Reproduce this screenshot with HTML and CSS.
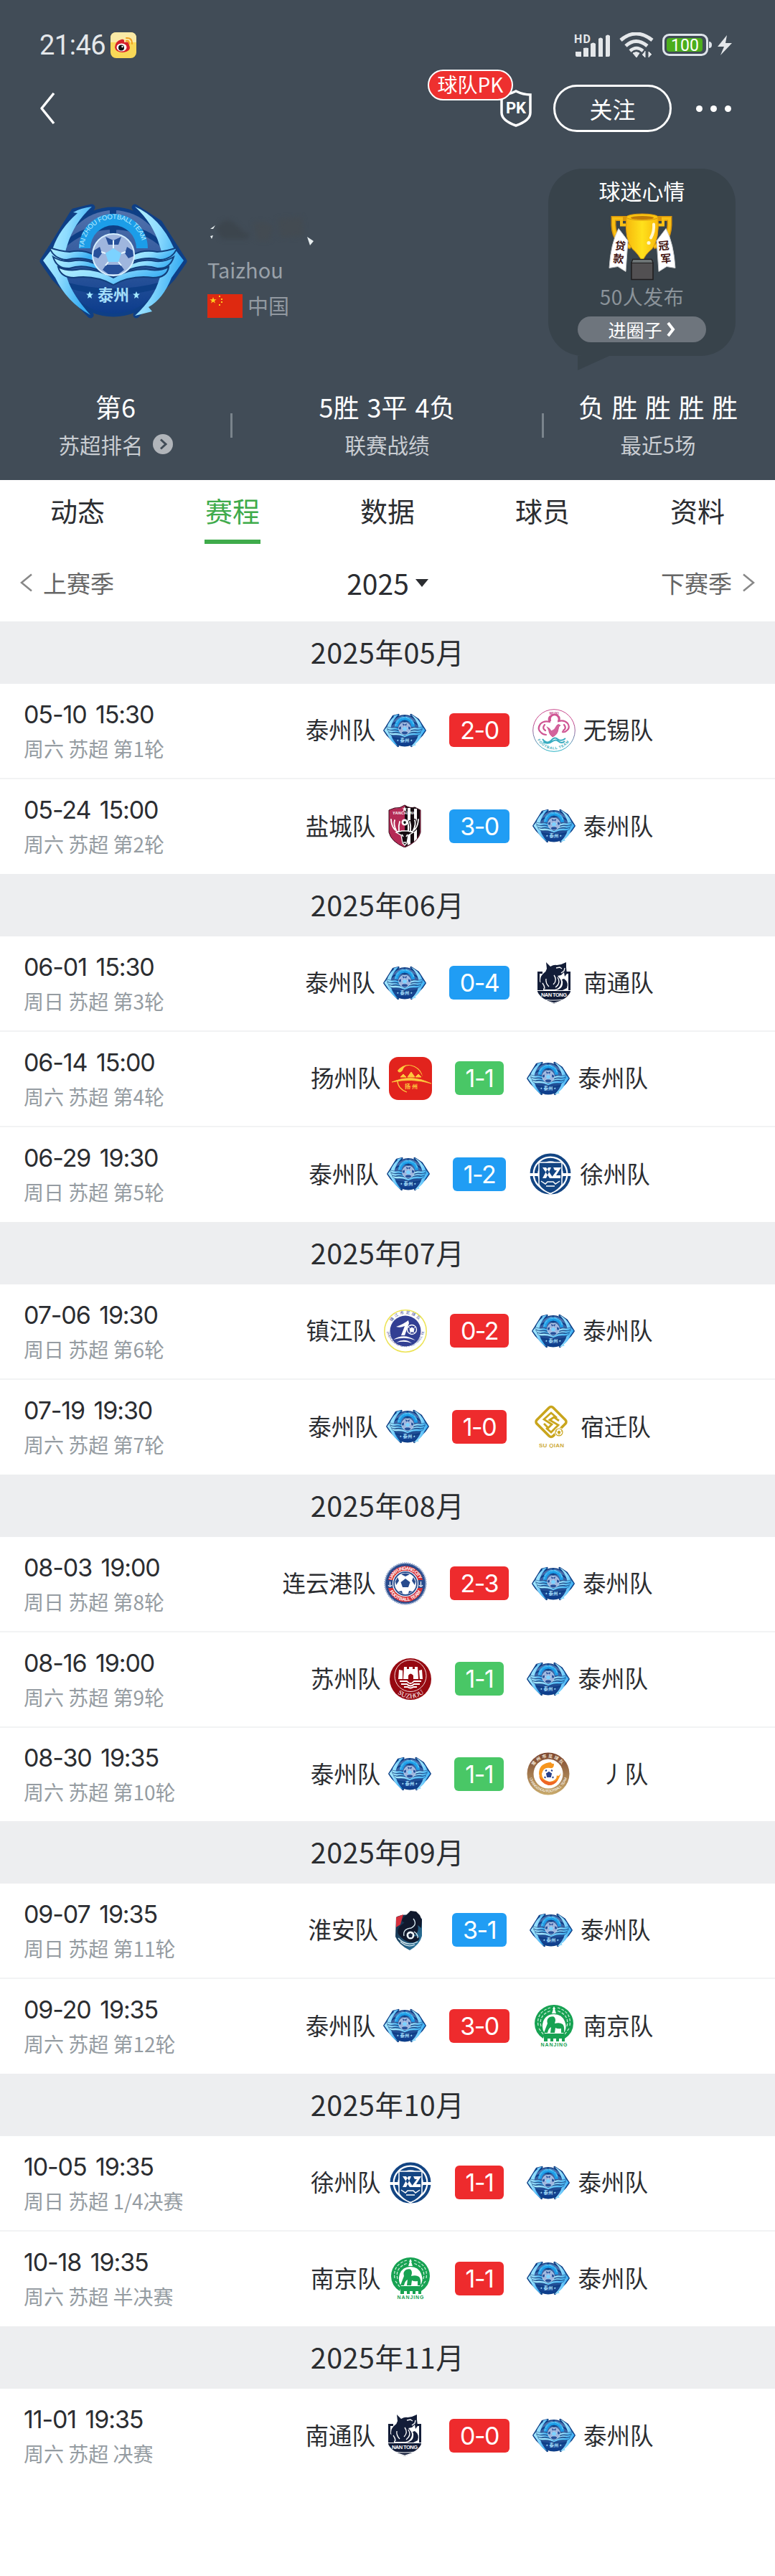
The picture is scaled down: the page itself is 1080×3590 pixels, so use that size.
FILE: index.html
```html
<!DOCTYPE html>
<html lang="zh-CN">
<head>
    <meta charset="UTF-8">
    <meta name="viewport" content="width=device-width, initial-scale=1.0">
    <title>泰州队 - 赛程</title>
    <link rel="stylesheet" href="styles.css">
</head>
<body>
    <!-- team crests -->
    <svg class="defs" width="0" height="0">
        <defs>
            <linearGradient id="tzBall" x1="0" y1="0" x2="0" y2="1">
                <stop offset="0" stop-color="#5272ac"/>
                <stop offset="0.6" stop-color="#2a549a"/>
                <stop offset="1" stop-color="#0c3c8c"/>
            </linearGradient>
            <linearGradient id="tzWing" x1="0" y1="0" x2="1" y2="0.4">
                <stop offset="0" stop-color="#b5f2ff"/>
                <stop offset="0.5" stop-color="#8fdcff"/>
                <stop offset="1" stop-color="#39aef3"/>
            </linearGradient>
            <linearGradient id="wx" x1="0" y1="0" x2="0" y2="1">
                <stop offset="0.3" stop-color="#c8488c"/>
                <stop offset="1" stop-color="#25b2c4"/>
            </linearGradient>
            <linearGradient id="cz" x1="0" y1="0" x2="0" y2="1">
                <stop offset="0" stop-color="#7c4630"/>
                <stop offset="1" stop-color="#c9ab6c"/>
            </linearGradient>
            <linearGradient id="ha" x1="0" y1="0" x2="1" y2="1">
                <stop offset="0" stop-color="#0d1d35"/>
                <stop offset="1" stop-color="#3183ad"/>
            </linearGradient>
            <linearGradient id="cup" x1="0" y1="0" x2="1" y2="0">
                <stop offset="0" stop-color="#f6b80c"/>
                <stop offset="0.5" stop-color="#ffe11c"/>
                <stop offset="1" stop-color="#f7b90a"/>
            </linearGradient>
        </defs>

        <symbol id="taizhou" viewBox="0 0 206 162">
            <g fill="#0e3f86" stroke="#0e3f86" stroke-width="9" stroke-linejoin="round">
                <path d="M73 6L48 12L16 64L5 81L21 104L71 156L39 104V58Z"/>
                <path d="M133 6L167 28L190 64L201 81L185 104L135 156L167 104V58Z"/>
                <circle cx="103" cy="82" r="72"/>
            </g>
            <circle cx="103" cy="82" r="72" fill="url(#tzBall)"/>
            <path d="M98 10h9v40h-9zM40 50Q60 32 98 30V37Q58 40 36 62ZM166 50Q146 32 107 30V37Q148 40 170 62ZM36 110Q103 128 170 110V118Q103 138 38 118Z" fill="#0e3f86"/>
            <path d="M55 63A48 48 0 0 1 151 63H135A32 32 0 0 0 71 63Z" fill="#1c9de8"/>
            <path id="tzArc" d="M62 63A41 41 0 0 1 144 63" fill="none"/>
            <text font-family="Liberation Sans" font-size="9.5" fill="#b9ecff"><textPath href="#tzArc" textLength="118">TAI ZHOU FOOTBALL TEAM</textPath></text>
            <g fill="url(#tzWing)">
                <path d="M73 5Q57 7 47 13L53 14Q28 36 19 62L5 80L22 104Q38 138 71 156Q46 128 39 106Q30 82 39 58Q48 28 73 5Z"/>
                <path d="M133 5Q168 20 187 62L201 80L184 104Q172 134 152 145L157 151L133 157Q160 132 167 106Q176 82 167 58Q158 28 133 5Z"/>
            </g>
            <g fill="url(#tzWing)" stroke="#123f7c" stroke-width="2">
                <path d="M14 62Q28 67 42 68Q60 64 76 72V81Q56 74 38 79Q20 78 14 62Z"/>
                <path d="M192 62Q178 67 164 68Q146 64 130 72V81Q150 74 168 79Q186 78 192 62Z"/>
                <path d="M19 75Q30 82 44 81Q64 77 80 86L86 95Q62 84 42 91Q24 92 19 75Z"/>
                <path d="M187 75Q176 82 162 81Q142 77 126 86L120 95Q144 84 164 91Q182 92 187 75Z"/>
                <path d="M26 89Q40 96 58 92Q82 92 103 104Q124 92 148 92Q166 96 180 89Q178 104 158 104Q128 100 103 114Q78 100 48 104Q30 104 26 89Z"/>
            </g>
            <circle cx="103" cy="72" r="29" fill="#9fb6de" stroke="#d5efff" stroke-width="2"/>
            <path d="M103 63l11 7l-4 12h-14l-4-12z" fill="#7cd2ff"/>
            <path d="M92 47l11 5l11-5l-4 11h-14zM76 66l8-5l3 9l-5 7l-7-3zM130 66l-8-5l-3 9l5 7l7-3zM88 93l5-7h20l5 7l-8 6h-14z" fill="#27509a"/>
            <path d="M103 52v11M92 70l-6-2M114 70l6-2M96 82l-4 5M110 82l4 5" stroke="#e6f7ff" stroke-width="2"/>
            <text x="103" y="136" text-anchor="middle" font-family="Noto Sans CJK SC" font-weight="700" font-size="22" fill="#a4defa">泰州</text>
            <path d="M70 123l1.500 3.500h3.500l-3 2.500l1 4l-3-2l-3 2l1-4l-3-2.500h3.500zM135 123l1.500 3.500h3.500l-3 2.500l1 4l-3-2l-3 2l1-4l-3-2.500h3.500z" fill="#a4e9ff"/>
        </symbol>

        <symbol id="wuxi" viewBox="0 0 60 60">
            <circle cx="30" cy="30" r="29.300" fill="#fff" stroke="url(#wx)" stroke-width="1"/>
            <text x="30" y="7.500" text-anchor="middle" font-family="Liberation Sans" font-weight="700" font-size="5" fill="#c8488c">WUXI</text>
            <g fill="none" stroke="#cf5593" stroke-width="2.200" stroke-linecap="round">
                <path d="M25 16a6 6 0 1 1 11 1M24 18q-3-5 1-8q5-4 10-1q4 3 2 8q7-2 12 3q4 6-1 10q-3 3-6 2M24 18q-8-2-13 3q-5 7 1 12q3 3 7 3"/>
                <path d="M17 22q-4 5 1 8M44 22q4 5-1 8"/>
                <path d="M20 25q5 2 6 6q5-1 8-8q2-3 5 0q-3 1-3 5q-1 8-8 11q-4-3-5-7" fill="#d3639c" stroke-width="1"/>
            </g>
            <path d="M14 42q6 8 12 2q5-6 9-2q5 4 11-1M15 46q7 4 13-1q5-3 8 0q5 4 9 0" fill="none" stroke="#38acc0" stroke-width="2"/>
            <path id="wxArc" d="M7 43A26.500 26.500 0 0 0 53 43" fill="none"/>
            <text font-family="Liberation Sans" font-weight="700" font-size="5" fill="#30a9b8"><textPath href="#wxArc" textLength="52">FOOTBALL TEAM</textPath></text>
        </symbol>

        <symbol id="yancheng" viewBox="0 0 60 60">
            <path d="M30 1Q37 6 44 4L52 8V39Q49 52 30 60Q11 52 8 39V8L16 5Q23 6 30 1Z" fill="#b42a55" stroke="#3a0c1c"/>
            <path d="M30 2Q37 6 44 4L51 8V39Q48 52 30 59Z" fill="#150c11"/>
            <path d="M34 5h4v50l-4 2zM43 6h4v42l-4 4z" fill="#fff"/>
            <path d="M30 3l1 2.500h2.500l-2 1.500l1 3l-2.500-1.500l-2.500 1.500l1-3l-2-1.500H29z" fill="#fff"/>
            <text x="13" y="14" font-family="Liberation Sans" font-weight="700" font-style="italic" font-size="5.500" fill="#fff" textLength="33">YANCHENG</text>
            <g fill="none" stroke="#150c11" stroke-width="4" stroke-linecap="round">
                <path d="M36 39Q48 37 49 21M42 36Q46 28 44 22M38 37Q39 30 37 24"/>
            </g>
            <g fill="none" stroke="#fff" stroke-width="1.800" stroke-linecap="round">
                <path d="M24 39Q12 37 11 21M18 36Q14 28 16 22M22 37Q21 30 23 24M36 39Q48 37 49 21M42 36Q46 28 44 22M38 37Q39 30 37 24"/>
            </g>
            <circle cx="30" cy="25" r="4.500" fill="#fff"/><path d="M30 23l2 1.500l-1 2.500h-2l-1-2.500z" fill="#111"/>
            <path d="M18 39l8-2h8l8 2l-7 4l-2 11l-3 3l-3-3l-2-11z" fill="#150c11" stroke="#fff" stroke-width="1.300"/>
            <path d="M26 42l2 3M34 42l-2 3M28 53h4" stroke="#fff" stroke-width="1.500"/>
        </symbol>

        <symbol id="nantong" viewBox="0 0 60 60">
            <g fill="#131d38">
                <path d="M7 14H14V17H10V41H50V17H47V14H53V42Q50 51 30 59Q10 51 7 42Z"/>
            </g>
            <path d="M11 17H49V40H11Z" fill="#fff"/>
            <g fill="#131d38">
                <path d="M19 1l6 6q5-3 9-2l6-1l7-3v7l1 9l-3 4l-1-6l-4 4l-5 1l4 5q2 4 0 8q-2 5-8 6H17q-6-5-6-13q0-6 5-10q3-2 4-6z"/>
                <path d="M44 24q7 5 4 13l-6 3h-9q8-2 9-8q1-4-1-7z"/>
                <path d="M10 28l5 5v7h-5z"/>
            </g>
            <path d="M33 9l5-1l3 2M40 16l4-3l1-4M30 19q5 7-1 13M35 22q5 8-3 14M19 24q-1 6 4 11M14 30q3 4 3 8" fill="none" stroke="#fff" stroke-width="1.300"/>
            <path d="M7 40.500h46" stroke="#fff"/>
            <text x="30" y="49" text-anchor="middle" font-family="Liberation Sans" font-weight="700" font-size="7.500" fill="#fff" textLength="36">NAN TONG</text>
            <path d="M16 53Q30 55 44 53M20 55l10 3l10-3" fill="none" stroke="#fff" stroke-width="1.200"/>
        </symbol>

        <symbol id="yangzhou" viewBox="0 0 60 60">
            <rect width="60" height="60" rx="13" fill="#e2231d"/>
            <path d="M12 19Q22 7 36 13Q46 18 47 28Q42 14 29 12Q21 11 19 19Q14 24 12 19Z" fill="#fdc93d"/>
            <path d="M4 35Q31 23 59 37Q32 29 4 35Z" fill="#fdc93d" stroke="#fdc93d" stroke-width="0.800"/>
            <path d="M12 33q0 11 13 16" fill="none" stroke="#fdc93d" stroke-width="1.300"/>
            <path d="M16 28l4-4l4 4zM26 28l5-7l5 7zM37 28l4-4l4 4z" fill="#fdc93d" stroke="#fdc93d"/>
            <text x="31" y="44" text-anchor="middle" font-family="Noto Sans CJK SC" font-weight="700" font-size="8" fill="#fdc93d">扬 州</text>
        </symbol>

        <symbol id="xuzhou" viewBox="0 0 60 60">
            <circle cx="30" cy="30" r="26.500" fill="#fff" stroke="#134583" stroke-width="4"/>
            <circle cx="30" cy="30" r="20" fill="none" stroke="#134583" stroke-width="4.500"/>
            <path d="M1 29h58v4H1z" fill="#fff"/>
            <path d="M14 14H46V45Q42 52 30 58Q18 52 14 45Z" fill="#134583" stroke="#fff" stroke-width="1.500"/>
            <path d="M14 47Q18 54 30 57Q42 54 46 47" fill="none" stroke="#fff"/>
            <path d="M19 21h5l10 15h-5zM31 21h-4l-8 15h5zM34 21h11l-7 11h6v4H31l8-11h-3z" fill="#fff"/>
            <path d="M17 40l6 4l3-3h8l3 3l6-4M24 47h12" fill="none" stroke="#fff" stroke-width="1.500"/>
        </symbol>

        <symbol id="zhenjiang" viewBox="0 0 60 60">
            <circle cx="30" cy="30" r="29.200" fill="#fff" stroke="#ece354" stroke-width="1.500"/>
            <circle cx="30" cy="30" r="21.500" fill="#323f93"/>
            <path d="M17 24Q28 20 34 15L35 19L29 36H24L29 23Q23 26 17 24ZM13 42Q28 32 44 43Q30 37 13 42ZM17 46Q29 39 39 47Q29 43 17 46Z" fill="#fff"/>
            <circle cx="39" cy="28" r="6.500" fill="none" stroke="#fff" stroke-width="1.300"/>
            <path d="M39 25l3 2l-1 4h-4l-1-4zM34 24l2 2M44 24l-2 2M36 34l1-3M43 33l-2-2" fill="#fff" stroke="#fff"/>
            <path id="zjTop" d="M11 17A23 23 0 0 1 50 17" fill="none"/>
            <path id="zjBot" d="M4 31A26.500 26.500 0 0 0 56 31" fill="none"/>
            <text font-family="Noto Sans CJK SC" font-size="5.500" fill="#323f93"><textPath href="#zjTop" textLength="44">镇江市足球队</textPath></text>
            <text font-family="Liberation Sans" font-size="4.500" fill="#323f93"><textPath href="#zjBot" textLength="80">ZHENJIANG CITY FOOTBALL TEAM</textPath></text>
        </symbol>

        <symbol id="suqian" viewBox="0 0 60 60">
            <rect x="14" y="7.500" width="32" height="32" rx="4" transform="rotate(45 30 23.500)" fill="none" stroke="#c9a51d" stroke-width="3.600"/>
            <path d="M38 18L30 11L20 20L31 27L26 32L20 26M41 22L34 17L28 21L40 28L30 38L23 32" fill="none" stroke="#c9a51d" stroke-width="2.800"/>
            <circle cx="41" cy="38" r="6.500" fill="#fff"/>
            <circle cx="41" cy="38" r="5" fill="#fff" stroke="#c9a51d" stroke-width="1.200"/>
            <path d="M41 36l2 1.500l-1 2.500h-2l-1-2.500zM37 36l1 1M45 36l-1 1M41 43v-2" fill="#c9a51d" stroke="#c9a51d"/>
            <text x="30.500" y="59" text-anchor="middle" font-family="Liberation Sans" font-weight="700" font-size="8" fill="#cda938" textLength="35">SU QIAN</text>
        </symbol>

        <symbol id="lianyungang" viewBox="0 0 60 60">
            <circle cx="30" cy="30" r="28.500" fill="#284b8d" stroke="#8ea3c9" stroke-width="2.500" stroke-dasharray="1.500 1.200"/>
            <path d="M6 25A24.500 24.500 0 0 1 54 25L47 25A18 18 0 0 0 13 25ZM6 36A24.500 24.500 0 0 0 54 36L47 36A18 18 0 0 1 13 36Z" fill="#d93439"/>
            <circle cx="30" cy="30" r="17.500" fill="#284b8d" stroke="#fff" stroke-width="1.200"/>
            <circle cx="30" cy="30" r="15" fill="#fff"/>
            <path d="M30 23l6.500 5l-2.500 7h-8l-2.500-7zM24 17q6-3 12 0l-6 3zM16 27l3-6l2 5l-4 6zM44 27l-3-6l-2 5l4 6zM20 41l5-1l1 4zM40 41l-5-1l-1 4z" fill="#284b8d"/>
            <path d="M8.500 27v7M6 32q2.500 4 5 0M51.500 27v7M49 32q2.500 4 5 0" fill="none" stroke="#fff" stroke-width="1.200"/>
            <path id="lyTop" d="M10.500 25A20.500 20.500 0 0 1 49.500 25" fill="none"/>
            <path id="lyBot" d="M7 38A24.500 24.500 0 0 0 53 38" fill="none"/>
            <g font-family="Liberation Sans" font-weight="700" font-size="6.500" fill="#fff">
                <text><textPath href="#lyTop" textLength="50">LIANYUNGANG CITY</textPath></text>
                <text><textPath href="#lyBot" startOffset="3" textLength="53">FOOTBALL TEAM</textPath></text>
            </g>
        </symbol>

        <symbol id="suzhou" viewBox="0 0 60 60">
            <circle cx="30" cy="30" r="29" fill="#960911"/>
            <circle cx="30" cy="25.500" r="22" fill="none" stroke="#f6dcdc"/>
            <path d="M14 17l5 1v12h-6zM21 13h4v3h3v-3h5v3h3v-3h4l1 17h-7v-5q-4-5-7 0v5h-7zM42 18l4-1l1 13h-4z" fill="#fff"/>
            <path d="M15 33h10q5 6 10 0h10M17 37h8q5 5 10 0h8M21 41h5q4 3 8 0h5" fill="none" stroke="#fff" stroke-width="1.800"/>
            <path id="szArc" d="M10 48A27 27 0 0 0 50 48" fill="none"/>
            <text font-family="Liberation Serif" font-size="9.500" fill="#fff"><textPath href="#szArc" startOffset="3" textLength="40">SUZHOU</textPath></text>
        </symbol>

        <symbol id="changzhou" viewBox="0 0 60 60">
            <circle cx="30" cy="30" r="29.500" fill="url(#cz)"/>
            <circle cx="30" cy="30" r="20.500" fill="#fff"/>
            <path d="M38 16q-4 0-4-2q-17 1-17 16q1 13 14 16q12 0 17-18q-3 7-6 4q0 8-10 9q-11-2-11-11q2-10 12-8q5 1 5-6z" fill="#f6961f"/>
            <path d="M17 33q3 11 14 13q8 0 13-8q-8 5-14 3q-9-2-13-8z" fill="#ee6426"/>
            <circle cx="31" cy="31" r="8" fill="#fff"/>
            <path d="M31 28l3 2l-1 4h-4l-1-4zM26 26l2-1M36 26l-2-1M25 34l1 2M37 34l-1 2" fill="#27418d" stroke="#27418d" stroke-width="2"/>
            <path id="czTop" d="M10 19A23 23 0 0 1 50 19" fill="none"/>
            <path id="czBot" d="M4 36A27 27 0 0 0 56 36" fill="none"/>
            <text font-family="Noto Sans CJK SC" font-weight="700" font-size="6" fill="#f3e6d6"><textPath href="#czTop" textLength="46">常州市足球队</textPath></text>
            <text font-family="Liberation Sans" font-size="5" fill="#fff"><textPath href="#czBot" textLength="70">CHANGZHOU FOOTBALL TEAM</textPath></text>
        </symbol>

        <symbol id="huaian" viewBox="0 0 60 60">
            <path d="M14 12Q26 4 50 14V38Q47 50 33 58Q17 50 13 39Z" fill="url(#ha)"/>
            <path d="M14 12L24 8L20 22L14 26Z" fill="#d5303d"/>
            <path d="M23 14L34 3L42 4L47 9L50 16L49 27Q46 24 44 23Q47 34 37 38Q50 38 45 44Q35 52 22 41Q13 34 18 26Q25 18 31 18L26 20L22 17Z" fill="#10192d"/>
            <path d="M38 14Q44 22 35 27Q23 28 25 38M17 41Q29 54 44 46M20 46Q30 55 40 50M39 32q6 4 5 9" fill="none" stroke="#dcedf3" stroke-width="1.300"/>
            <circle cx="34" cy="37" r="5.500" fill="#edf5f8"/><path d="M34 34l3 2l-1 4h-4l-1-4z" fill="#15233c"/>
        </symbol>

        <symbol id="nanjing" viewBox="0 0 60 60">
            <path d="M15 48Q3 40 3 27A27 26 0 0 1 57 27Q57 40 45 48L43 41Q49 34 45 24Q41 14 30 14Q19 14 15 24Q12 34 17 41Z" fill="#17a252"/>
            <path d="M8 30Q5 11 25 5M12 31Q8 15 26 9M52 30Q55 11 35 5M48 31Q52 15 34 9M9 34l6 8M51 34l-6 8" fill="none" stroke="#d5f1df" stroke-width="1.200" stroke-dasharray="4 2"/>
            <path d="M30 3l2 4h-1l2 6h-6l2-6h-1z" fill="#fff"/>
            <path d="M24 18q8-3 8 5l-1 4q7-2 11 1q3 3 2 12h-4v-6q-5 1-8-1l-1 7h-6l1-8q-4 2-5 8h-5l3-8l2-5q-2-6 3-9z" fill="#17a252"/>
            <path d="M16 41H45V52H41V48H37V52H33V48H29V52H25V48H21V52H16Z" fill="#17a252"/>
            <text x="30" y="59" text-anchor="middle" font-family="Liberation Sans" font-weight="700" font-size="7" fill="#17a252" textLength="37">NANJING</text>
        </symbol>
    </svg>

    <header class="header">
        <div class="status-bar">
            <span class="clock">21:46</span>
            <svg class="weibo" viewBox="0 0 36 36">
                <rect width="36" height="36" rx="8" fill="#f9d857"/>
                <path d="M0 14V8Q0 0 8 0H28Q36 0 36 8V14Z" fill="#fbeaa6"/>
                <path d="M6 21Q7 12 15 10Q20 9 19 14Q27 12 26 18Q30 26 17 28Q7 28 6 21Z" fill="#d5212a"/>
                <ellipse cx="15.500" cy="21" rx="7" ry="5.500" fill="#fff"/>
                <circle cx="15" cy="21.500" r="4" fill="#111"/><circle cx="16.500" cy="20" r="1.200" fill="#fff"/>
                <path d="M22 8q8-1 8 8M22 12q4-1 4 4" fill="none" stroke="#f0a01e" stroke-width="2" stroke-linecap="round"/>
            </svg>
            <div class="status-icons">
                <svg width="51" height="34" viewBox="0 0 51 34">
                    <text x="0" y="14" font-family="Roboto" font-weight="700" font-size="16" fill="#e4e7ea" textLength="23">HD</text>
                    <path d="M2 26h8v7H4q-2 0-2-2zM13 21q4-1 7 0v12h-7zM23 15q4-3 7 0v18h-7zM34 8q3-3 6 0v25h-6zM44 4q3-3 6 0v27q0 2-2 2h-4z" fill="#e4e7ea"/>
                </svg>
                <svg width="48" height="36" viewBox="0 0 48 36">
                    <path d="M2 11Q23-7 46 11" fill="none" stroke="#e4e7ea" stroke-width="5"/>
                    <path d="M9 19Q23 6 39 19" fill="none" stroke="#e4e7ea" stroke-width="5"/>
                    <path d="M15 26Q24 18 33 26" fill="none" stroke="#e4e7ea" stroke-width="4.500"/>
                    <path d="M19 29q5-3 9 0l-4 6zM36 26v9l-4-4M41 35v-8l4 4" fill="#e4e7ea" stroke="#e4e7ea"/>
                </svg>
                <svg width="70" height="32" viewBox="0 0 70 32">
                    <rect x="1.500" y="1.500" width="61" height="28" rx="8" fill="none" stroke="#dfe4ea" stroke-width="3"/>
                    <rect x="6" y="6" width="50" height="19" rx="4" fill="#4cae1d"/>
                    <path d="M65 11q4 0 4 4.500t-4 4.500z" fill="#dfe4ea"/>
                    <text x="31.500" y="24" text-anchor="middle" font-family="Roboto" font-size="23" fill="#fff">100</text>
                </svg>
                <svg width="20" height="30" viewBox="0 0 20 30"><path d="M13 1L0 17H9L4 29L20 12H11Z" fill="#e4e7ea"/></svg>
            </div>
        </div>

        <div class="nav-bar">
            <svg width="22" height="46" viewBox="0 0 22 46"><path d="M20 2L3 23L20 44" fill="none" stroke="#fff" stroke-width="3.500" stroke-linejoin="round"/></svg>
            <div class="nav-actions">
                <div class="pk">
                    <svg width="46" height="52" viewBox="0 0 46 52">
                        <path d="M23 2Q33 7 43 7V32Q43 43 23 50Q3 43 3 32V7Q13 7 23 2Z" fill="none" stroke="#fff" stroke-width="3.500"/>
                        <text x="23" y="33" text-anchor="middle" font-family="Roboto" font-weight="700" font-size="22" fill="#fff">PK</text>
                    </svg>
                    <span class="pk-tip">球队PK</span>
                </div>
                <button class="follow">关注</button>
                <div class="more"><i></i><i></i><i></i></div>
            </div>
        </div>

        <div class="team">
            <svg class="team-logo"><use href="#taizhou"/></svg>
            <div class="team-info">
                <svg class="team-name" viewBox="0 0 150 56">
                    <g class="smudge">
                        <path d="M12 30Q26 8 42 26T62 30L56 44H20Z" fill="#3c454d"/>
                        <path d="M64 22Q80 16 92 28L86 46H70ZM98 16L132 14L134 40L102 42Z" fill="#434b52"/>
                    </g>
                    <path d="M4 30l7-5l-3 5zM4 40l4-1l-2 5zM139 41l9 6l-5 6z" fill="#e7edef"/>
                </svg>
                <div class="team-en">Taizhou</div>
                <div class="country">
                    <svg width="49" height="33" viewBox="0 0 49 33">
                        <rect width="49" height="33" fill="#de2910"/>
                        <path d="M8 4l1.200 3.300h3.500l-2.800 2l1 3.300l-2.900-2l-2.900 2l1-3.300l-2.800-2h3.500zM16 2h2v2h-2zM19 6h2v2h-2zM19 10h2v2h-2zM16 14h2v2h-2z" fill="#ffca1e"/>
                    </svg>
                    <span>中国</span>
                </div>
            </div>
            <div class="mood">
                <div class="mood-title">球迷心情</div>
                <svg class="trophy" viewBox="0 0 92 92">
                    <path d="M26 7H6V16Q7 42 30 46M68 7H84V16Q83 42 62 46" fill="none" stroke="#d8940b" stroke-width="7"/>
                    <path d="M24 16H17V7H6V16Q7 42 30 46M68 16H75V7H84V16Q83 42 62 46" fill="none" stroke="#f8bf14" stroke-width="4"/>
                    <path d="M24 5H68Q70 36 60 49Q49 58 47 66H45Q42 58 32 49Q21 36 24 5Z" fill="url(#cup)" stroke="#dc9a0d"/>
                    <ellipse cx="46" cy="5" rx="22" ry="4.500" fill="#f9c410" stroke="#d5930f"/>
                    <ellipse cx="46" cy="6" rx="16" ry="2.500" fill="#bf7a0a"/>
                    <path d="M62 15Q63 25 58 34" fill="none" stroke="#fff8d0" stroke-width="4" stroke-linecap="round"/>
                    <circle cx="55" cy="41" r="2.500" fill="#fff8d0"/>
                    <path d="M33 64H59L61 69V92H31V69Z" fill="#525052" stroke="#1f1d1e" stroke-width="1.500"/>
                    <path d="M33 64H59L61 69H31Z" fill="#6d7475" stroke="#1f1d1e"/>
                    <path d="M13 21L26 38L23 81L12 74L0 76Q2 42 13 21ZM79 21L66 38L69 81L80 74L92 76Q90 42 79 21Z" fill="#fff" stroke="#c5c8ca"/>
                    <g font-family="Noto Sans CJK SC" font-weight="700" font-size="15" fill="#421512">
                        <text transform="translate(7.500 50) rotate(5)">贷</text><text transform="translate(5 68) rotate(5)">款</text>
                        <text transform="translate(69 51) rotate(-5)">冠</text><text transform="translate(72 69) rotate(-5)">军</text>
                    </g>
                </svg>
                <div class="mood-count">50人发布</div>
                <div class="mood-btn">进圈子<svg width="14" height="22" viewBox="0 0 14 22"><path d="M3 2L10 11L3 20" fill="none" stroke="#fff" stroke-width="4"/></svg></div>
            </div>
        </div>

        <div class="stats">
            <div class="stat">
                <div class="stat-value">第6</div>
                <div class="stat-label">苏超排名<svg width="28" height="28" viewBox="0 0 28 28"><circle cx="14" cy="14" r="14" fill="#b1b5ba"/><path d="M11 7.500L18 14L11 20.500" fill="none" stroke="#414c57" stroke-width="3"/></svg></div>
            </div>
            <div class="stat wide">
                <div class="stat-value">5胜 3平 4负</div>
                <div class="stat-label">联赛战绩</div>
            </div>
            <div class="stat">
                <div class="stat-value recent"><span>负</span><span>胜</span><span>胜</span><span>胜</span><span>胜</span></div>
                <div class="stat-label">最近5场</div>
            </div>
        </div>
    </header>

    <nav class="tabs">
        <a class="tab">动态</a>
        <a class="tab active">赛程</a>
        <a class="tab">数据</a>
        <a class="tab">球员</a>
        <a class="tab">资料</a>
    </nav>

    <div class="season">
        <div class="season-side">
            <svg width="18" height="26" viewBox="0 0 18 26"><path d="M16 1.500L2 13L16 24.500" fill="none" stroke="#888" stroke-width="2.500"/></svg>
            上赛季
        </div>
        <div class="season-year">2025<svg width="18" height="11" viewBox="0 0 18 11"><path d="M0 0H18L9 11Z" fill="#2b2d31"/></svg></div>
        <div class="season-side next">
            下赛季
            <svg width="18" height="26" viewBox="0 0 18 26"><path d="M2 1.500L16 13L2 24.500" fill="none" stroke="#888" stroke-width="2.500"/></svg>
        </div>
    </div>

    <main>
        <section class="month">
            <h2>2025年05月</h2>
            <div class="match">
                <div class="when"><b>05-10 15:30</b><small>周六 苏超 第1轮</small></div>
                <div class="game"><span>泰州队</span><svg><use href="#taizhou"/></svg><em class="win">2-0</em><svg><use href="#wuxi"/></svg><span>无锡队</span></div>
            </div>
            <div class="match">
                <div class="when"><b>05-24 15:00</b><small>周六 苏超 第2轮</small></div>
                <div class="game"><span>盐城队</span><svg><use href="#yancheng"/></svg><em class="lose">3-0</em><svg><use href="#taizhou"/></svg><span>泰州队</span></div>
            </div>
        </section>

        <section class="month">
            <h2>2025年06月</h2>
            <div class="match">
                <div class="when"><b>06-01 15:30</b><small>周日 苏超 第3轮</small></div>
                <div class="game"><span>泰州队</span><svg><use href="#taizhou"/></svg><em class="lose">0-4</em><svg><use href="#nantong"/></svg><span>南通队</span></div>
            </div>
            <div class="match">
                <div class="when"><b>06-14 15:00</b><small>周六 苏超 第4轮</small></div>
                <div class="game"><span>扬州队</span><svg><use href="#yangzhou"/></svg><em class="draw">1-1</em><svg><use href="#taizhou"/></svg><span>泰州队</span></div>
            </div>
            <div class="match">
                <div class="when"><b>06-29 19:30</b><small>周日 苏超 第5轮</small></div>
                <div class="game"><span>泰州队</span><svg><use href="#taizhou"/></svg><em class="lose">1-2</em><svg><use href="#xuzhou"/></svg><span>徐州队</span></div>
            </div>
        </section>

        <section class="month">
            <h2>2025年07月</h2>
            <div class="match">
                <div class="when"><b>07-06 19:30</b><small>周日 苏超 第6轮</small></div>
                <div class="game"><span>镇江队</span><svg><use href="#zhenjiang"/></svg><em class="win">0-2</em><svg><use href="#taizhou"/></svg><span>泰州队</span></div>
            </div>
            <div class="match">
                <div class="when"><b>07-19 19:30</b><small>周六 苏超 第7轮</small></div>
                <div class="game"><span>泰州队</span><svg><use href="#taizhou"/></svg><em class="win">1-0</em><svg><use href="#suqian"/></svg><span>宿迁队</span></div>
            </div>
        </section>

        <section class="month">
            <h2>2025年08月</h2>
            <div class="match">
                <div class="when"><b>08-03 19:00</b><small>周日 苏超 第8轮</small></div>
                <div class="game long"><span>连云港队</span><svg><use href="#lianyungang"/></svg><em class="win">2-3</em><svg><use href="#taizhou"/></svg><span>泰州队</span></div>
            </div>
            <div class="match">
                <div class="when"><b>08-16 19:00</b><small>周六 苏超 第9轮</small></div>
                <div class="game"><span>苏州队</span><svg><use href="#suzhou"/></svg><em class="draw">1-1</em><svg><use href="#taizhou"/></svg><span>泰州队</span></div>
            </div>
            <div class="match short">
                <div class="when"><b>08-30 19:35</b><small>周六 苏超 第10轮</small></div>
                <div class="game"><span>泰州队</span><svg><use href="#taizhou"/></svg><em class="draw">1-1</em><svg><use href="#changzhou"/></svg><span class="clipped">丿队</span></div>
            </div>
        </section>

        <section class="month">
            <h2>2025年09月</h2>
            <div class="match">
                <div class="when"><b>09-07 19:35</b><small>周日 苏超 第11轮</small></div>
                <div class="game"><span>淮安队</span><svg><use href="#huaian"/></svg><em class="lose">3-1</em><svg><use href="#taizhou"/></svg><span>泰州队</span></div>
            </div>
            <div class="match">
                <div class="when"><b>09-20 19:35</b><small>周六 苏超 第12轮</small></div>
                <div class="game"><span>泰州队</span><svg><use href="#taizhou"/></svg><em class="win">3-0</em><svg><use href="#nanjing"/></svg><span>南京队</span></div>
            </div>
        </section>

        <section class="month">
            <h2>2025年10月</h2>
            <div class="match">
                <div class="when"><b>10-05 19:35</b><small>周日 苏超 1/4决赛</small></div>
                <div class="game"><span>徐州队</span><svg><use href="#xuzhou"/></svg><em class="win">1-1</em><svg><use href="#taizhou"/></svg><span>泰州队</span></div>
            </div>
            <div class="match">
                <div class="when"><b>10-18 19:35</b><small>周六 苏超 半决赛</small></div>
                <div class="game"><span>南京队</span><svg><use href="#nanjing"/></svg><em class="win">1-1</em><svg><use href="#taizhou"/></svg><span>泰州队</span></div>
            </div>
        </section>

        <section class="month">
            <h2>2025年11月</h2>
            <div class="match">
                <div class="when"><b>11-01 19:35</b><small>周六 苏超 决赛</small></div>
                <div class="game"><span>南通队</span><svg><use href="#nantong"/></svg><em class="win">0-0</em><svg><use href="#taizhou"/></svg><span>泰州队</span></div>
            </div>
        </section>
    </main>
</body>
</html>
```
FILE: styles.css
```css
/* styles.css */
* {
    box-sizing: border-box;
}

body {
    margin: 0;
    min-height: 3590px;
    font-family: "Noto Sans CJK SC", sans-serif;
    color: #2b2d31;
    background-color: #fff;
}

svg {
    display: block;
    flex: none;
}

.defs {
    position: absolute;
}

/* header */
.header {
    height: 669px;
    padding-top: 40px;
    background-color: #414c57;
    color: #fff;
}

.status-bar {
    display: flex;
    align-items: center;
    height: 46px;
    padding: 0 60px 0 55px;
}

.clock {
    width: 99px;
    font-family: Roboto, sans-serif;
    font-size: 38px;
    letter-spacing: -0.5px;
    color: #e4e7ea;
}

.weibo {
    width: 36px;
    height: 36px;
}

.status-icons {
    display: flex;
    align-items: center;
    gap: 0 7px;
    margin-left: auto;
}

.status-icons svg:nth-child(2) {
    margin: 0 5px;
}

.nav-bar {
    display: flex;
    align-items: center;
    justify-content: space-between;
    height: 66px;
    margin-top: 32px;
    padding: 0 61px 0 55px;
}

.nav-actions {
    display: flex;
    align-items: center;
}

.pk {
    position: relative;
    margin-right: 29px;
}

.pk-tip {
    position: absolute;
    right: 27px;
    bottom: 37px;
    width: 119px;
    height: 43px;
    border: 2px solid #fff;
    border-radius: 22px;
    background-color: #ee302f;
    font-size: 28px;
    line-height: 37px;
    text-align: center;
    white-space: nowrap;
}

.follow {
    width: 165px;
    height: 66px;
    padding: 0;
    border: 3px solid #fff;
    border-radius: 33px;
    background: none;
    color: #fff;
    font-family: inherit;
    font-size: 32px;
    line-height: 56px;
}

.more {
    display: flex;
    gap: 11px;
    margin-left: 34px;
}

.more i {
    width: 9px;
    height: 9px;
    border-radius: 50%;
    background-color: #fff;
}

.team {
    display: flex;
    align-items: flex-start;
    height: 261px;
    margin-top: 51px;
    padding: 0 55px;
}

.team-logo {
    width: 206px;
    height: 162px;
    margin-top: 48px;
}

.team-info {
    margin: 54px auto 0 28px;
}

.team-name {
    width: 150px;
    height: 56px;
}

.smudge {
    filter: blur(3px);
}

.team-en {
    margin-top: 8px;
    font-size: 29px;
    line-height: 44px;
    color: #99a1a9;
}

.country {
    display: flex;
    align-items: center;
    gap: 7px;
    height: 44px;
    margin-top: 7px;
    font-size: 29px;
    line-height: 44px;
    color: #9299a1;
}

.country span {
    padding-bottom: 2px;
}

.mood {
    position: relative;
    display: flex;
    flex-direction: column;
    align-items: center;
    width: 261px;
    height: 261px;
    padding-top: 9px;
    border-radius: 48px;
    background-color: #38434b;
}

.mood::after {
    content: "";
    position: absolute;
    left: 41px;
    top: 261px;
    border-top: 20px solid #38434b;
    border-right: 44px solid transparent;
}

.mood-title {
    font-size: 30px;
    line-height: 42px;
}

.trophy {
    width: 92px;
    height: 93px;
    margin-top: 11px;
    overflow: visible;
}

.mood-count {
    margin-top: 4px;
    font-size: 28px;
    line-height: 38px;
    letter-spacing: 0.5px;
    color: #8b939a;
}

.mood-btn {
    display: flex;
    align-items: center;
    justify-content: center;
    gap: 5px;
    width: 179px;
    height: 36px;
    margin-top: 9px;
    border-radius: 18px;
    background-color: #6e757d;
    font-size: 25px;
    line-height: 34px;
}

.stats {
    display: flex;
    margin-top: 43px;
}

.stat {
    position: relative;
    width: 322px;
    text-align: center;
}

.stat.wide {
    width: 434px;
    padding-left: 1px;
}

.stat + .stat::before {
    content: "";
    position: absolute;
    left: -1px;
    top: 37px;
    width: 3px;
    height: 34px;
    background-color: #7a848c;
}

.stat-value {
    font-size: 36px;
    line-height: 54px;
    word-spacing: 3px;
}

.recent {
    display: flex;
    justify-content: center;
    gap: 10.500px;
}

.stat-label {
    display: flex;
    align-items: center;
    justify-content: center;
    gap: 13px;
    font-size: 29.500px;
    line-height: 52px;
    color: #c9cdd2;
}

/* tabs */
.tabs {
    display: flex;
    height: 89px;
}

.tab {
    flex: 1;
    display: flex;
    flex-direction: column;
    align-items: center;
    font-size: 38px;
    line-height: 83px;
}

.tab.active {
    color: #3fab4b;
}

.tab.active::after {
    content: "";
    width: 78px;
    height: 6px;
    background-color: #3fab4b;
}

/* season picker */
.season {
    display: flex;
    align-items: center;
    height: 108px;
    padding: 0 28px;
    font-size: 33px;
    color: #666;
}

.season-side {
    flex: 1;
    display: flex;
    align-items: center;
    gap: 14px;
}

.season-side.next {
    justify-content: flex-end;
}

.season-year {
    display: flex;
    align-items: center;
    gap: 9px;
    font-size: 39px;
    color: #2b2d31;
}

/* schedule */
.month h2 {
    margin: 0;
    height: 87px;
    background-color: #edeef0;
    font-size: 39.500px;
    font-weight: 400;
    line-height: 83px;
    letter-spacing: 0.5px;
    text-align: center;
}

.match {
    display: flex;
    align-items: center;
    height: 133px;
    padding-left: 33px;
    border-bottom: 2px solid #f2f3f4;
}

.match:last-child {
    height: 132px;
    border-bottom: none;
}

.match.short {
    height: 130px;
}

.when {
    width: 313px;
    white-space: nowrap;
}

.when b {
    display: block;
    font-family: Inter, sans-serif;
    font-size: 34px;
    font-weight: 400;
    line-height: 48px;
    letter-spacing: -1.100px;
    word-spacing: 4px;
}

.when small {
    display: block;
    font-size: 28px;
    line-height: 46px;
    color: #959ca2;
}

.game {
    display: flex;
    align-items: center;
    justify-content: center;
    width: 644px;
    padding-bottom: 2px;
    font-size: 32.500px;
    line-height: 48px;
}

.game span {
    padding-bottom: 3px;
}

.game svg {
    width: 60px;
    height: 60px;
    margin: 0 11px;
}

.game em {
    margin: 0 21px;
    padding: 0 15px;
    border-radius: 6px;
    color: #fff;
    font-family: Inter, sans-serif;
    font-size: 34px;
    font-style: normal;
    line-height: 47px;
    letter-spacing: -1.500px;
}

/* four-character name keeps the score on the axis */
.game.long {
    margin-left: -33px;
    width: 677px;
}

.clipped {
    padding-left: 33px;
}

.win {
    background-color: #ee2b2d;
}

.lose {
    background-color: #209df4;
}

.draw {
    background-color: #49c766;
}
```
